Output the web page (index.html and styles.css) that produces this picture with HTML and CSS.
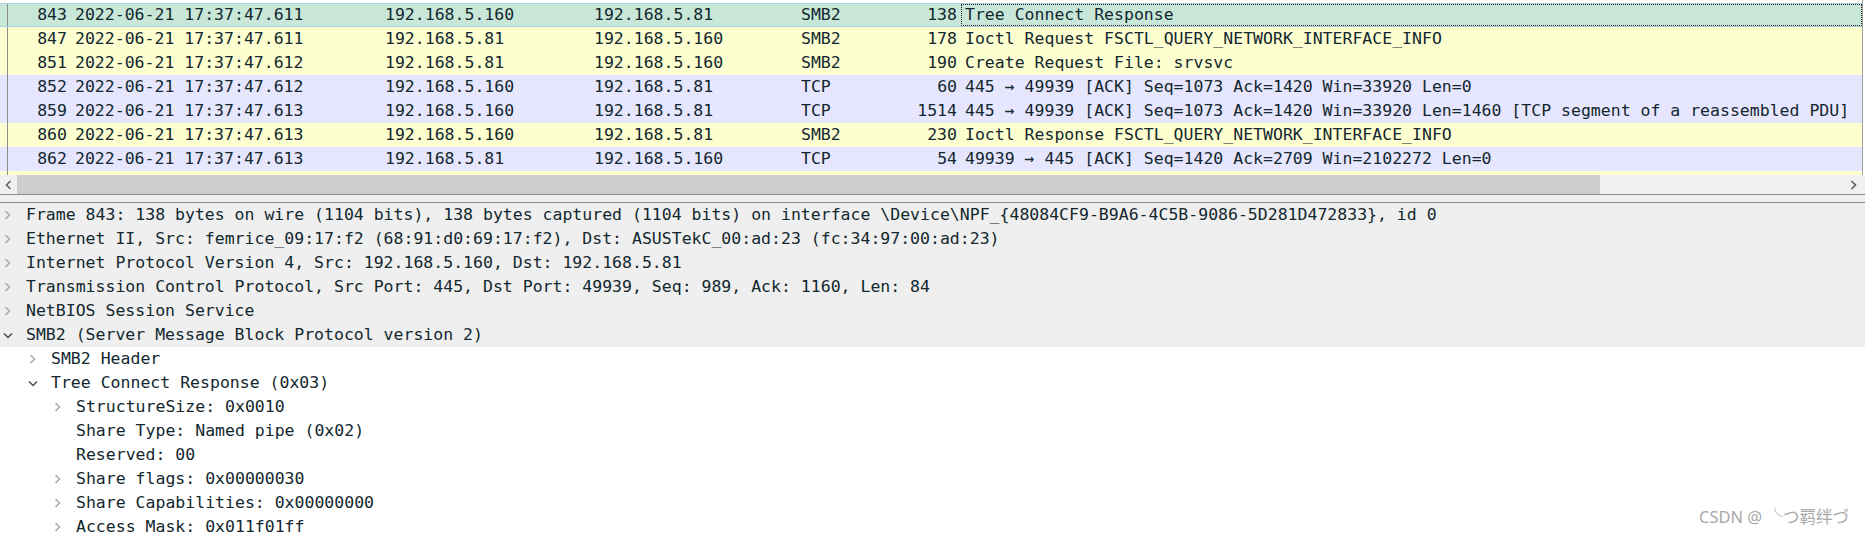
FILE: index.html
```html
<!DOCTYPE html>
<html>
<head>
<meta charset="utf-8">
<link rel="stylesheet" href="styles.css">
</head>
<body>
<div class="app">
  <div class="plist">
    <div class="prow sel"><span class="c-gap"></span><span class="c-no">843</span><span class="c-time">2022-06-21 17:37:47.611</span><span class="c-src">192.168.5.160</span><span class="c-dst">192.168.5.81</span><span class="c-proto">SMB2</span><span class="c-len">138</span><span class="c-info focus">Tree Connect Response</span></div>
    <div class="prow smb"><span class="c-gap"></span><span class="c-no">847</span><span class="c-time">2022-06-21 17:37:47.611</span><span class="c-src">192.168.5.81</span><span class="c-dst">192.168.5.160</span><span class="c-proto">SMB2</span><span class="c-len">178</span><span class="c-info">Ioctl Request FSCTL_QUERY_NETWORK_INTERFACE_INFO</span></div>
    <div class="prow smb"><span class="c-gap"></span><span class="c-no">851</span><span class="c-time">2022-06-21 17:37:47.612</span><span class="c-src">192.168.5.81</span><span class="c-dst">192.168.5.160</span><span class="c-proto">SMB2</span><span class="c-len">190</span><span class="c-info">Create Request File: srvsvc</span></div>
    <div class="prow tcp"><span class="c-gap"></span><span class="c-no">852</span><span class="c-time">2022-06-21 17:37:47.612</span><span class="c-src">192.168.5.160</span><span class="c-dst">192.168.5.81</span><span class="c-proto">TCP</span><span class="c-len">60</span><span class="c-info">445 → 49939 [ACK] Seq=1073 Ack=1420 Win=33920 Len=0</span></div>
    <div class="prow tcp"><span class="c-gap"></span><span class="c-no">859</span><span class="c-time">2022-06-21 17:37:47.613</span><span class="c-src">192.168.5.160</span><span class="c-dst">192.168.5.81</span><span class="c-proto">TCP</span><span class="c-len">1514</span><span class="c-info">445 → 49939 [ACK] Seq=1073 Ack=1420 Win=33920 Len=1460 [TCP segment of a reassembled PDU]</span></div>
    <div class="prow smb"><span class="c-gap"></span><span class="c-no">860</span><span class="c-time">2022-06-21 17:37:47.613</span><span class="c-src">192.168.5.160</span><span class="c-dst">192.168.5.81</span><span class="c-proto">SMB2</span><span class="c-len">230</span><span class="c-info">Ioctl Response FSCTL_QUERY_NETWORK_INTERFACE_INFO</span></div>
    <div class="prow tcp"><span class="c-gap"></span><span class="c-no">862</span><span class="c-time">2022-06-21 17:37:47.613</span><span class="c-src">192.168.5.81</span><span class="c-dst">192.168.5.160</span><span class="c-proto">TCP</span><span class="c-len">54</span><span class="c-info">49939 → 445 [ACK] Seq=1420 Ack=2709 Win=2102272 Len=0</span></div>
    <div class="prow smb partial"><span class="c-gap"></span></div>
  </div>
  <div class="hscroll">
    <span class="sb-btn"><svg width="7" height="10" viewBox="0 0 7 10"><path d="M5.5 1 L1.5 5 L5.5 9" fill="none" stroke="#606060" stroke-width="1.6"/></svg></span>
    <span class="sb-thumb"></span>
    <span class="sb-track"></span>
    <span class="sb-btn right"><svg width="7" height="10" viewBox="0 0 7 10"><path d="M1.5 1 L5.5 5 L1.5 9" fill="none" stroke="#606060" stroke-width="1.6"/></svg></span>
  </div>
  <div class="splitter"></div>
  <div class="tree">
    <div class="trow top"><span class="arr"><svg class="col" viewBox="0 0 7 10"><path d="M1.5 1 L5.5 5 L1.5 9"/></svg></span><span class="txt">Frame 843: 138 bytes on wire (1104 bits), 138 bytes captured (1104 bits) on interface \Device\NPF_{48084CF9-B9A6-4C5B-9086-5D281D472833}, id 0</span></div>
    <div class="trow top"><span class="arr"><svg class="col" viewBox="0 0 7 10"><path d="M1.5 1 L5.5 5 L1.5 9"/></svg></span><span class="txt">Ethernet II, Src: femrice_09:17:f2 (68:91:d0:69:17:f2), Dst: ASUSTekC_00:ad:23 (fc:34:97:00:ad:23)</span></div>
    <div class="trow top"><span class="arr"><svg class="col" viewBox="0 0 7 10"><path d="M1.5 1 L5.5 5 L1.5 9"/></svg></span><span class="txt">Internet Protocol Version 4, Src: 192.168.5.160, Dst: 192.168.5.81</span></div>
    <div class="trow top"><span class="arr"><svg class="col" viewBox="0 0 7 10"><path d="M1.5 1 L5.5 5 L1.5 9"/></svg></span><span class="txt">Transmission Control Protocol, Src Port: 445, Dst Port: 49939, Seq: 989, Ack: 1160, Len: 84</span></div>
    <div class="trow top"><span class="arr"><svg class="col" viewBox="0 0 7 10"><path d="M1.5 1 L5.5 5 L1.5 9"/></svg></span><span class="txt">NetBIOS Session Service</span></div>
    <div class="trow top"><span class="arr"><svg class="exp" viewBox="0 0 10 7"><path d="M1 1.5 L5 5.5 L9 1.5"/></svg></span><span class="txt">SMB2 (Server Message Block Protocol version 2)</span></div>
    <div class="trow l1"><span class="arr"><svg class="col" viewBox="0 0 7 10"><path d="M1.5 1 L5.5 5 L1.5 9"/></svg></span><span class="txt">SMB2 Header</span></div>
    <div class="trow l1"><span class="arr"><svg class="exp" viewBox="0 0 10 7"><path d="M1 1.5 L5 5.5 L9 1.5"/></svg></span><span class="txt">Tree Connect Response (0x03)</span></div>
    <div class="trow l2"><span class="arr"><svg class="col" viewBox="0 0 7 10"><path d="M1.5 1 L5.5 5 L1.5 9"/></svg></span><span class="txt">StructureSize: 0x0010</span></div>
    <div class="trow l2"><span class="arr"></span><span class="txt">Share Type: Named pipe (0x02)</span></div>
    <div class="trow l2"><span class="arr"></span><span class="txt">Reserved: 00</span></div>
    <div class="trow l2"><span class="arr"><svg class="col" viewBox="0 0 7 10"><path d="M1.5 1 L5.5 5 L1.5 9"/></svg></span><span class="txt">Share flags: 0x00000030</span></div>
    <div class="trow l2"><span class="arr"><svg class="col" viewBox="0 0 7 10"><path d="M1.5 1 L5.5 5 L1.5 9"/></svg></span><span class="txt">Share Capabilities: 0x00000000</span></div>
    <div class="trow l2"><span class="arr"><svg class="col" viewBox="0 0 7 10"><path d="M1.5 1 L5.5 5 L1.5 9"/></svg></span><span class="txt">Access Mask: 0x011f01ff</span></div>
  </div>
  <div class="watermark">CSDN @ ╰つ羁绊づ</div>
</div>
</body>
</html>
```

FILE: styles.css
```css
html, body {
  margin: 0;
  padding: 0;
  background: #ffffff;
}
.app {
  position: relative;
  width: 1865px;
  height: 534px;
  overflow: hidden;
  font-family: "DejaVu Sans Mono", "Liberation Mono", monospace;
  font-size: 16.5px;
  color: #12272e;
}
.plist {
  padding-top: 3px;
  width: 1862px;
  border-right: 1px solid #a0a0a0;
}
.prow {
  display: flex;
  height: 24px;
  line-height: 24px;
  white-space: nowrap;
  box-sizing: border-box;
}
.prow.partial {
  height: 4px;
}
.prow.sel {
  background: #c9e7d9;
  border-top: 1px solid #a6d3e3;
  border-bottom: 1px solid #a6d3e3;
  line-height: 22px;
}
.prow.smb { background: #feffd0; }
.prow.tcp { background: #e7e6ff; }
.prow span { display: block; overflow: hidden; box-sizing: border-box; }
.c-gap { width: 8px; border-right: 1px solid #8c8c8c; flex: none; }
.c-no { width: 63px; padding-right: 4px; text-align: right; flex: none; }
.c-time { width: 310px; padding-left: 4px; flex: none; }
.c-src { width: 209px; padding-left: 4px; flex: none; }
.c-dst { width: 207px; padding-left: 4px; flex: none; }
.c-proto { width: 100px; padding-left: 4px; flex: none; }
.c-len { width: 64px; padding-right: 4px; text-align: right; flex: none; }
.c-info { flex: 1; padding-left: 4px; }
.c-info.focus {
  outline: 1px dotted #202020;
  outline-offset: -1px;
}
.hscroll {
  display: flex;
  height: 19px;
  background: #f0f0f0;
}
.sb-btn {
  width: 17px;
  display: flex;
  align-items: center;
  justify-content: center;
  flex: none;
}
.sb-btn.right { width: 24px; }
.sb-thumb {
  width: 1583px;
  background: #cdcdcd;
  flex: none;
}
.sb-track { flex: 1; }
.splitter {
  height: 7px;
  background: #f0f0f0;
  border-top: 1px solid #8a8a8a;
  border-bottom: 1px solid #8a8a8a;
}
.tree {
  background: #ffffff;
}
.trow {
  display: flex;
  height: 24px;
  line-height: 24px;
  white-space: nowrap;
}
.trow.top { background: #efefef; }
.trow.l1 { padding-left: 25px; }
.trow.l2 { padding-left: 50px; }
.arr {
  width: 26px;
  flex: none;
  display: flex;
  align-items: center;
  padding-left: 3px;
  box-sizing: border-box;
}
.arr svg { fill: none; stroke-width: 1.5; }
.arr svg.col { width: 7px; height: 10px; stroke: #a8a8a8; margin-left: 1px; }
.arr svg.exp { width: 10px; height: 7px; stroke: #505050; }
.watermark {
  position: absolute;
  right: 16px;
  bottom: 6px;
  font-family: "Noto Sans", "Noto Sans CJK SC", sans-serif;
  font-size: 16.5px;
  color: #a8a8a8;
  white-space: nowrap;
}
```
